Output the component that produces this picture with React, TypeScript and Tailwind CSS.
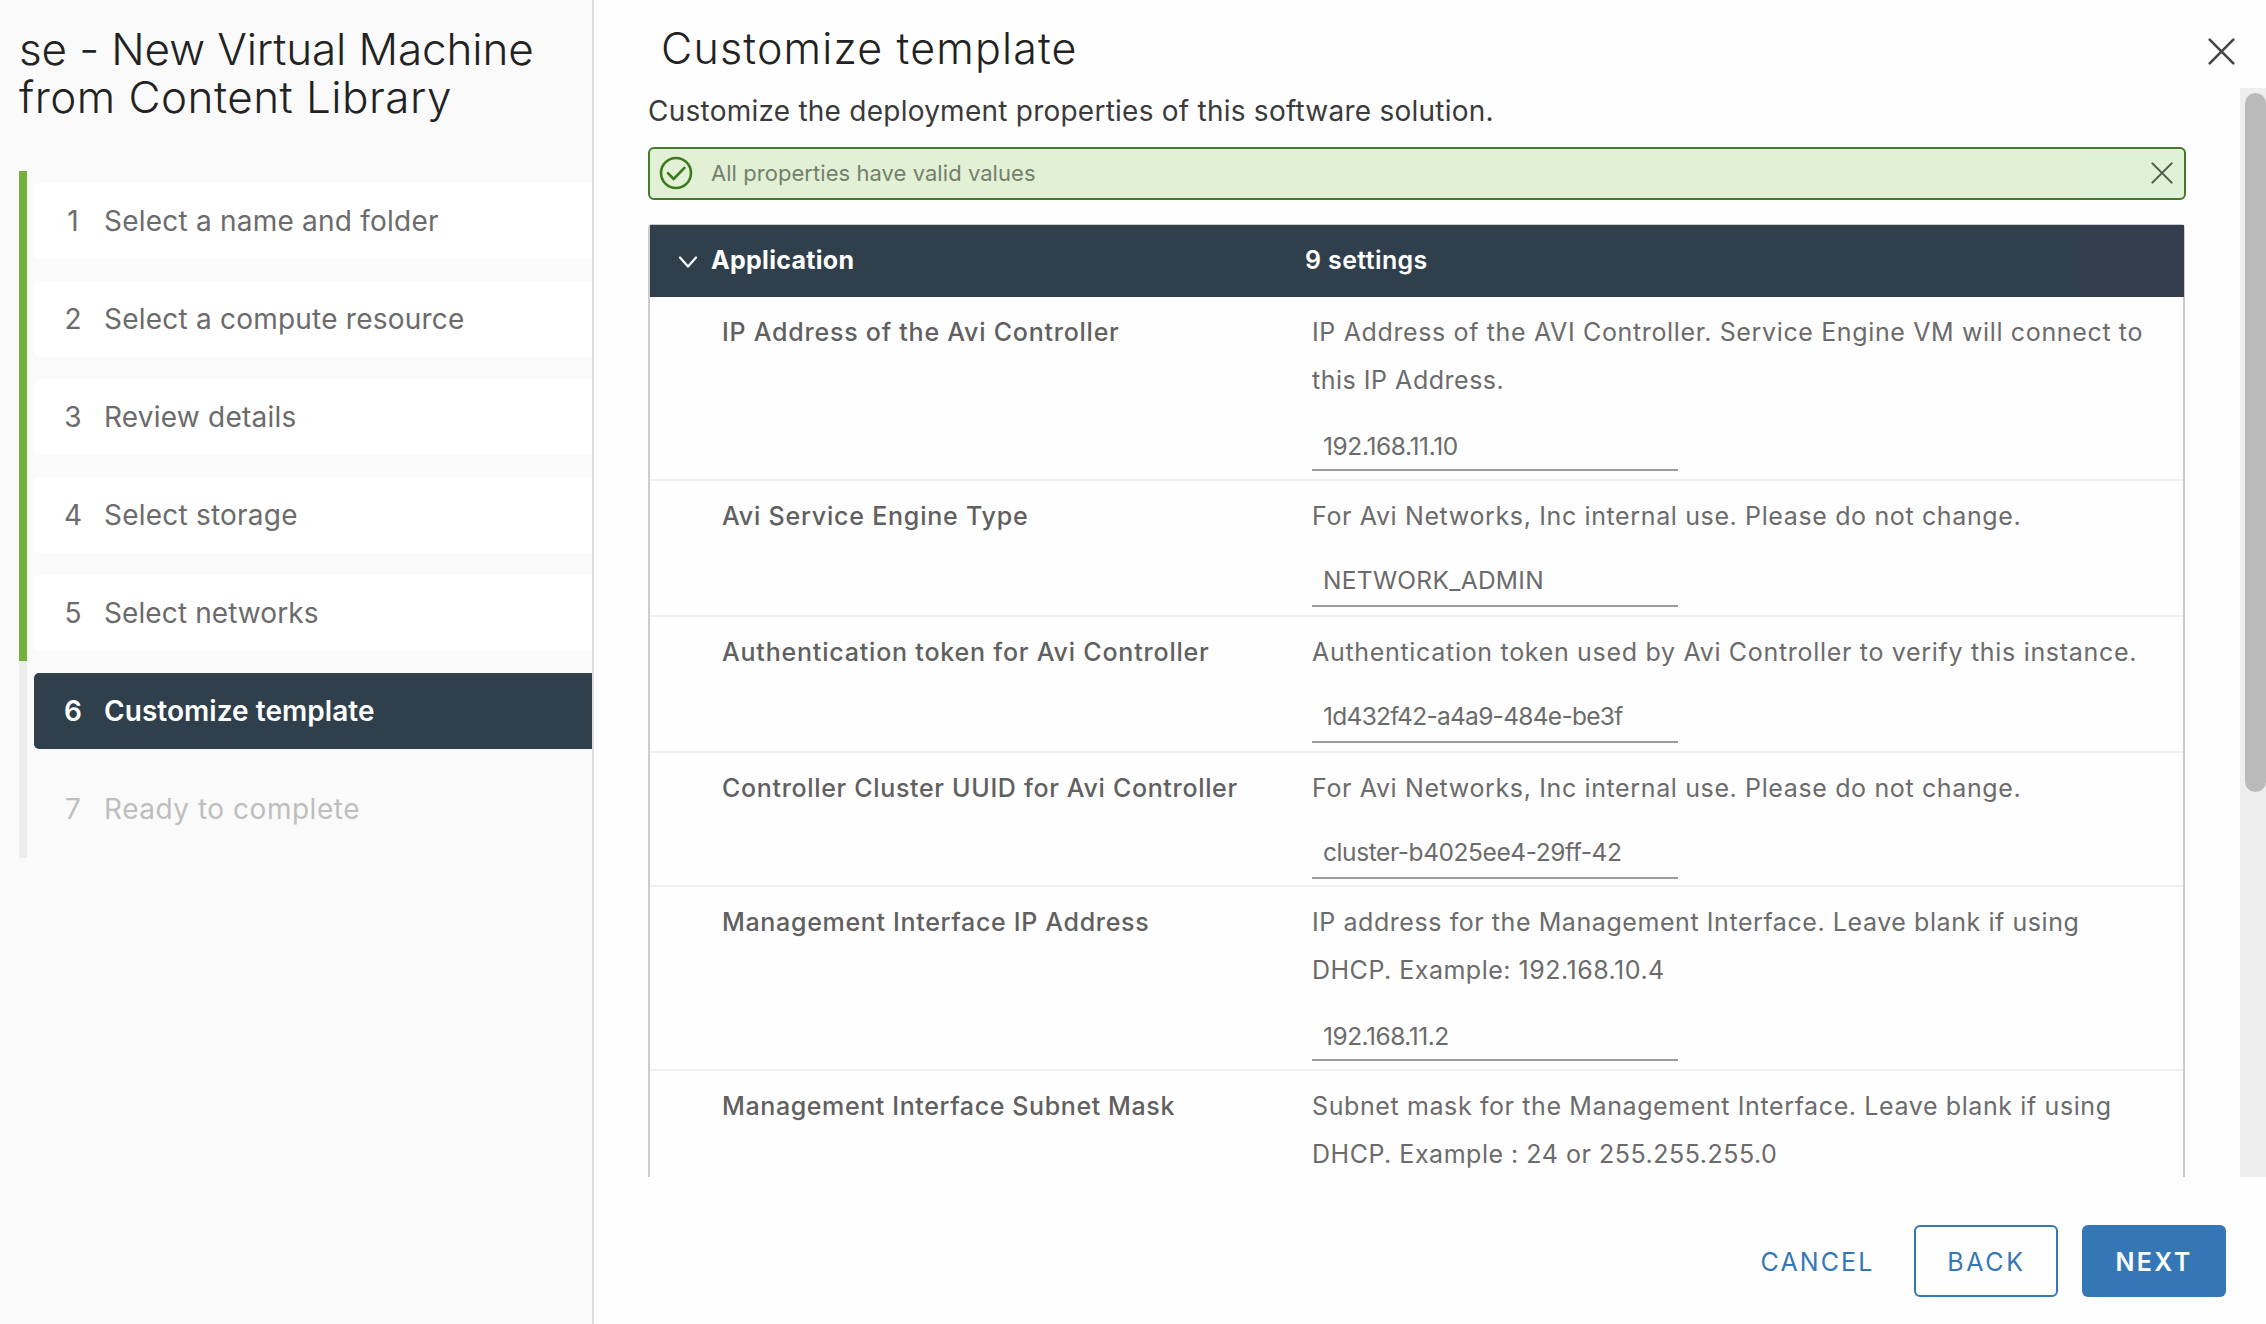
import React from "react";

type Step = { n: number; label: string; tracking: string; state: "done" | "active" | "todo" };

const steps: Step[] = [
  { n: 1, label: "Select a name and folder", tracking: "tracking-[0.22px]", state: "done" },
  { n: 2, label: "Select a compute resource", tracking: "tracking-[0.22px]", state: "done" },
  { n: 3, label: "Review details", tracking: "tracking-[0.22px]", state: "done" },
  { n: 4, label: "Select storage", tracking: "tracking-[0.22px]", state: "done" },
  { n: 5, label: "Select networks", tracking: "tracking-[0.1px]", state: "done" },
  { n: 6, label: "Customize template", tracking: "tracking-[0.05px]", state: "active" },
  { n: 7, label: "Ready to complete", tracking: "tracking-[0.52px]", state: "todo" },
];

const stepStyle = {
  done: "bg-white text-[#6b6b6b]",
  active: "bg-[#2f404c] text-white font-semibold",
  todo: "text-[#bebebe]",
};

type Line = { text: string; tracking: string };
type Setting = {
  label: string;
  labelTracking: string;
  lines: Line[];
  value?: Line;
  height: string;
  inputPad?: string;
};

const settings: Setting[] = [
  {
    label: "IP Address of the Avi Controller",
    labelTracking: "tracking-[0.76px]",
    lines: [
      { text: "IP Address of the AVI Controller. Service Engine VM will connect to", tracking: "tracking-[0.64px]" },
      { text: "this IP Address.", tracking: "tracking-[0.52px]" },
    ],
    value: { text: "192.168.11.10", tracking: "tracking-[-0.4px]" },
    height: "h-[184px]",
    inputPad: "pb-[8px] mb-[8px]",
  },
  {
    label: "Avi Service Engine Type",
    labelTracking: "tracking-[0.79px]",
    lines: [{ text: "For Avi Networks, Inc internal use. Please do not change.", tracking: "tracking-[0.63px]" }],
    value: { text: "NETWORK_ADMIN", tracking: "tracking-[0.3px]" },
    height: "h-[136px]",
    inputPad: "pb-[10px] mb-[8px]",
  },
  {
    label: "Authentication token for Avi Controller",
    labelTracking: "tracking-[0.8px]",
    lines: [{ text: "Authentication token used by Avi Controller to verify this instance.", tracking: "tracking-[0.69px]" }],
    value: { text: "1d432f42-a4a9-484e-be3f", tracking: "tracking-[-0.72px]" },
    height: "h-[136px]",
    inputPad: "pb-[10px] mb-[8px]",
  },
  {
    label: "Controller Cluster UUID for Avi Controller",
    labelTracking: "tracking-[0.67px]",
    lines: [{ text: "For Avi Networks, Inc internal use. Please do not change.", tracking: "tracking-[0.63px]" }],
    value: { text: "cluster-b4025ee4-29ff-42", tracking: "tracking-[-0.42px]" },
    height: "h-[134px]",
    inputPad: "pb-[10px] mb-[6px]",
  },
  {
    label: "Management Interface IP Address",
    labelTracking: "tracking-[0.68px]",
    lines: [
      { text: "IP address for the Management Interface. Leave blank if using", tracking: "tracking-[0.57px]" },
      { text: "DHCP. Example: 192.168.10.4", tracking: "tracking-[0.5px]" },
    ],
    value: { text: "192.168.11.2", tracking: "tracking-[-0.5px]" },
    height: "h-[184px]",
    inputPad: "pb-[8px] mb-[8px]",
  },
  {
    label: "Management Interface Subnet Mask",
    labelTracking: "tracking-[0.61px]",
    lines: [
      { text: "Subnet mask for the Management Interface. Leave blank if using", tracking: "tracking-[0.61px]" },
      { text: "DHCP. Example : 24 or 255.255.255.0", tracking: "tracking-[0.52px]" },
    ],
    height: "h-[184px]",
  },
];

function Cross({ className }: { className: string }) {
  return (
    <svg viewBox="0 0 24 24" fill="none" stroke="currentColor" strokeLinecap="round" className={className}>
      <path d="M1.5 1.5 22.5 22.5M22.5 1.5 1.5 22.5" strokeWidth="2.3" />
    </svg>
  );
}

function Sidebar() {
  return (
    <aside className="flex h-full w-[594px] shrink-0 flex-col border-r-2 border-[#dedede] bg-[#fafafa]">
      <h1 className="mt-[25px] ml-[19px] text-[44px] leading-[48px] font-light whitespace-nowrap text-[#222222]">
        <span className="block tracking-[-0.12px]">se - New Virtual Machine</span>
        <span className="block tracking-[0.48px]">from Content Library</span>
      </h1>
      <div className="mt-[50px] ml-[19px] flex">
        <div className="flex w-2 flex-col">
          <div className="h-[490px] bg-[#73b13c]" />
          <div className="h-[197px] bg-[#ececec]" />
        </div>
        <ol className="ml-[7px] flex flex-1 flex-col gap-[22px] pt-[12px] text-[28px]">
          {steps.map((s) => (
            <li key={s.n} className={`flex h-[76px] items-center rounded-l-[5px] ${stepStyle[s.state]}`}>
              <span className="flex w-[70px] justify-center pl-[8px]">{s.n}</span>
              <span className={`whitespace-nowrap ${s.tracking}`}>{s.label}</span>
            </li>
          ))}
        </ol>
      </div>
    </aside>
  );
}

function Alert() {
  return (
    <div className="flex h-[53px] w-[1538px] items-center rounded-[6px] border-2 border-[#42792b] bg-linear-to-r from-[#e2f0d5] from-[93.3%] to-[#dff1d7] to-[93.3%] pr-[11px] pb-px pl-[9px]">
      <svg viewBox="0 0 34 34" fill="none" stroke="#3c7a1f" strokeLinecap="round" strokeLinejoin="round" className="size-[34px]">
        <circle cx="17" cy="17" r="15" strokeWidth="2.6" />
        <path d="M9 17.2 14.6 23 25.4 11.9" strokeWidth="2.6" />
      </svg>
      <span className="ml-[18px] text-[22px] tracking-[0.05px] text-[#74806c]">All properties have valid values</span>
      <Cross className="ml-auto size-[22px] text-[#4f5b4a]" />
    </div>
  );
}

function SettingsTable() {
  return (
    <section className="w-[1537px] rounded-t-[4px] border-x-2 border-t border-[#cccccc]">
      <header className="-mr-px flex h-[72px] items-center bg-linear-to-r from-[#2f404c] from-[93.3%] to-[#333d4d] to-[93.3%] text-[25px] text-white">
        <div className="flex w-[655px] items-center pl-[28px]">
          <svg viewBox="0 0 20 14" fill="none" stroke="currentColor" strokeLinecap="round" strokeLinejoin="round" className="mt-[2px] h-[14px] w-5">
            <path d="M2 2.5 10 11.5 18 2.5" strokeWidth="2.2" />
          </svg>
          <span className="ml-[13px] font-bold tracking-[0.3px]">Application</span>
        </div>
        <span className="font-semibold tracking-[0.38px]">9 settings</span>
      </header>
      {settings.map((s) => (
        <div key={s.label} className={`flex border-b-2 border-[#eeeeee] pt-[11px] text-[25px] leading-[48px] whitespace-nowrap text-[#6b6b6b] ${s.height}`}>
          <div className={`ml-[72px] w-[590px] shrink-0 font-medium text-[#606060] ${s.labelTracking}`}>{s.label}</div>
          <div className="flex flex-1 flex-col">
            {s.lines.map((l) => (
              <p key={l.text} className={l.tracking}>
                {l.text}
              </p>
            ))}
            {s.value && (
              <div className={`mt-auto w-[366px] border-b-2 border-[#9c9c9c] pl-[11px] text-[24.5px] leading-[30px] ${s.value.tracking} ${s.inputPad}`}>
                {s.value.text}
              </div>
            )}
          </div>
        </div>
      ))}
    </section>
  );
}

export default function App() {
  return (
    <div className="flex h-[1324px] w-[2266px] overflow-hidden bg-[#fefefe] font-['Inter',sans-serif]">
      <Sidebar />
      <main className="flex min-w-0 flex-1 flex-col">
        <div className="flex h-[88px] shrink-0 items-start justify-between pr-[31px] pl-[67px]">
          <h2 className="mt-[24px] text-[43px] leading-[48px] font-light tracking-[1.15px] text-[#222222]">Customize template</h2>
          <Cross className="mt-[38px] size-[27px] text-[#444444]" />
        </div>
        <div className="flex h-[1089px] shrink-0 justify-between">
          <div className="flex flex-col overflow-hidden pl-[54px]">
            <p className="mt-[3px] shrink-0 text-[28px] leading-[40px] tracking-[0.24px] text-[#3a3a3a]">
              Customize the deployment properties of this software solution.
            </p>
            <div className="mt-[16px] mb-[24px]">
              <Alert />
            </div>
            <SettingsTable />
          </div>
          <div className="w-[26px] bg-[#eeeeee] pt-[5px] pl-[5px]">
            <div className="h-[699px] w-[21px] rounded-full bg-[#bababa]" />
          </div>
        </div>
        <footer className="flex items-start justify-end pt-[48px] pr-[40px] text-[25px] text-[#3577b5]">
          <button className="h-[72px] w-[152px] pt-[4px] pl-[7px] tracking-[2.1px]">CANCEL</button>
          <button className="ml-[24px] h-[72px] w-[144px] rounded-[6px] border-2 border-[#3577b5] pt-[4px] pl-[1px] tracking-[2.7px]">BACK</button>
          <button className="ml-[24px] h-[72px] w-[144px] rounded-[6px] bg-[#3577b5] pt-[4px] font-semibold tracking-[2.4px] text-white">NEXT</button>
        </footer>
      </main>
    </div>
  );
}
